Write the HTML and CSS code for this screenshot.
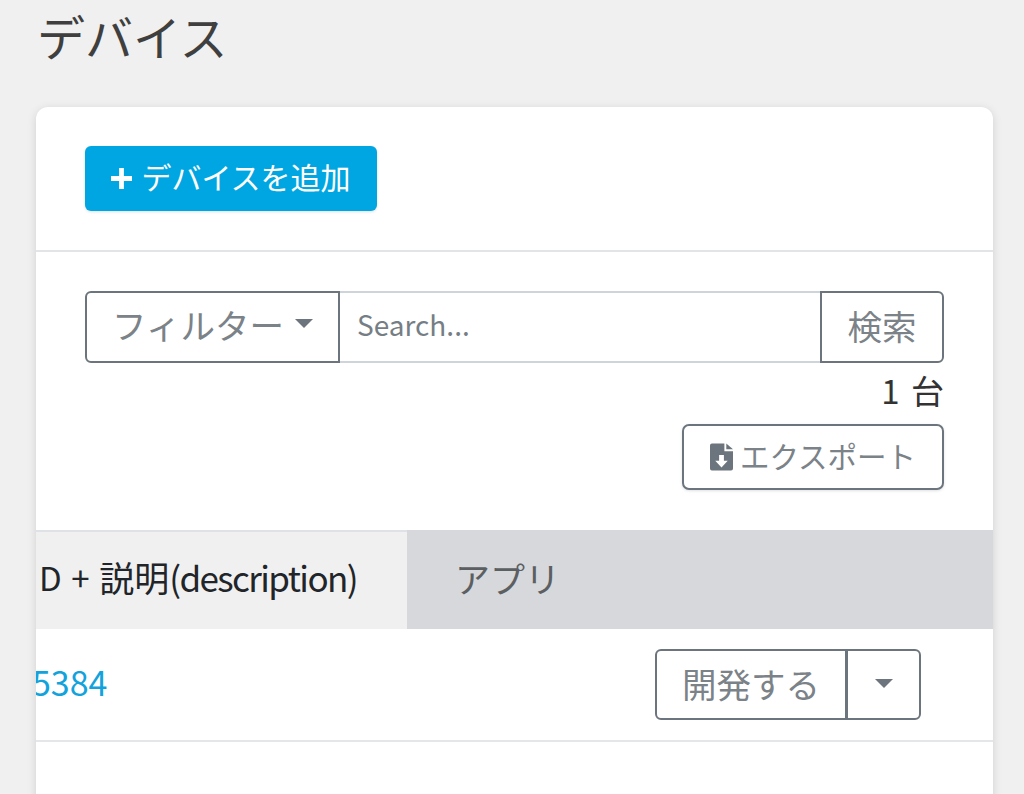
FILE: index.html
```html
<!DOCTYPE html>
<html lang="ja">
<head>
<meta charset="utf-8">
<title>デバイス</title>
<link rel="stylesheet" href="styles.css">
</head>
<body>
<main class="page">
  <h1 class="title">デバイス</h1>
  <section class="card">
    <div class="card-top">
      <button class="btn-add"><svg class="plus" viewBox="0 0 22 22"><path d="M8.500 0h5v8.500H22v5h-8.500V22h-5v-8.500H0v-5h8.500z"/></svg>デバイスを追加</button>
    </div>
    <div class="tools">
      <div class="search-group">
        <button class="btn-filter">フィルター<span class="caret caret-filter"></span></button>
        <div class="search-input">Search...</div>
        <button class="btn-search">検索</button>
      </div>
      <div class="count">1 台</div>
      <button class="btn-export"><svg class="file" viewBox="0 0 24 28"><path d="M0 2a2 2 0 0 1 2-2h13v8h9v18a2 2 0 0 1-2 2H2a2 2 0 0 1-2-2z"/><path d="M17 0l7 6h-7z"/><path class="file-arrow" d="M9.500 12h5v6h4L12 25l-6.500-7h4z"/></svg>エクスポート</button>
    </div>
    <div class="table-head">
      <div class="cell-id"><span class="id-prefix">D + </span><span>説明</span><span class="id-latin">(description)</span></div>
      <div class="cell-app">アプリ</div>
    </div>
    <div class="table-row">
      <a class="device-link" href="#">5384</a>
      <div class="btn-split">
        <button class="btn-dev">開発する</button>
        <button class="btn-drop"><span class="caret"></span></button>
      </div>
    </div>
  </section>
</main>
</body>
</html>
```

FILE: styles.css
```css
* { box-sizing: border-box; }
html, body { margin: 0; height: 100%; }
body {
  background: #f0f0f0;
  font-family: "Noto Sans CJK JP", "Noto Sans", sans-serif;
  overflow: hidden;
}
.page { height: 794px; overflow: hidden; padding: 0 31px 0 36px; }
.title {
  margin: 0;
  height: 107px;
  padding: 3px 0 0 1px;
  font-size: 48px;
  line-height: 64px;
  font-weight: 400;
  color: #3f3f3f;
}
.card {
  height: 720px;
  background: #fff;
  border-radius: 12px 12px 0 0;
  box-shadow: 0 2px 10px rgba(0, 0, 0, .13);
}
button { font-family: inherit; cursor: pointer; background: #fff; }
.card-top {
  height: 145px;
  padding: 39px 49px 0;
  border-bottom: 2px solid #e2e4e6;
}
.btn-add {
  display: flex;
  align-items: center;
  justify-content: center;
  width: 292px;
  height: 65px;
  padding: 0 0 6px;
  border: 0;
  border-radius: 6px;
  background: #00a6e2;
  color: #fff;
  font-size: 30px;
  box-shadow: 0 1px 3px rgba(0, 0, 0, .12);
}
.plus { width: 21px; height: 21px; margin: 6px 9px 0 0; fill: #fff; }
.tools {
  display: flex;
  flex-direction: column;
  align-items: flex-end;
  height: 278px;
  padding: 39px 49px 0;
}
.search-group { display: flex; width: 100%; height: 72px; }
.btn-filter {
  display: flex;
  align-items: center;
  justify-content: center;
  width: 255px;
  padding: 0 0 6px;
  border: 2px solid #6c757d;
  border-radius: 6px 0 0 6px;
  color: #7b8288;
  font-size: 34.500px;
}
.search-input {
  flex: 1;
  padding-left: 17px;
  border: solid #ced4da;
  border-width: 2px 0;
  color: #767e85;
  font-size: 28px;
  line-height: 62px;
}
.btn-search {
  width: 124px;
  padding: 0 0 5px;
  border: 2px solid #6c757d;
  border-radius: 0 6px 6px 0;
  color: #7b8288;
  font-size: 34.500px;
}
.count {
  height: 61px;
  color: #333;
  font-size: 33px;
  line-height: 55px;
  word-spacing: 4px;
}
.btn-export {
  display: flex;
  align-items: center;
  justify-content: center;
  width: 262px;
  height: 66px;
  padding: 0 0 4px;
  border: 2px solid #6c757d;
  border-radius: 7px;
  color: #7b8288;
  font-size: 29.500px;
  box-shadow: 0 1px 3px rgba(0, 0, 0, .12);
}
.file { width: 23px; height: 28px; margin: 3px 7px 0 0; fill: #6c757d; }
.file-arrow { fill: #fff; }
.caret {
  display: inline-block;
  width: 0;
  height: 0;
  border: 9px solid transparent;
  border-top-color: #6c757d;
  border-bottom-width: 0;
}
.caret-filter { margin: 0 0 1px 11px; }
.table-head { display: flex; height: 99px; border-top: 2px solid #dee2e6; }
.cell-id {
  display: flex;
  justify-content: flex-end;
  flex: 0 0 371px;
  overflow: hidden;
  padding-right: 50px;
  background: #f0f0f0;
  color: #212529;
  font-size: 35px;
  line-height: 90px;
  white-space: pre;
}
.id-prefix { font-size: 33px; letter-spacing: -.4px; word-spacing: 3px; }
.id-latin { letter-spacing: -1.600px; }
.cell-app {
  flex: 1;
  margin-top: -2px;
  padding-left: 48px;
  background: #d6d8db;
  color: #5c5f62;
  font-size: 35px;
  line-height: 96px;
}
.table-row {
  display: flex;
  align-items: flex-start;
  justify-content: space-between;
  height: 113px;
  padding: 20px 72px 0 0;
  border-bottom: 2px solid #e4e6e8;
  overflow: hidden;
}
.device-link {
  margin-left: -4px;
  color: #12a3dc;
  font-size: 34px;
  line-height: 66px;
  text-decoration: none;
}
.btn-split { display: flex; height: 71px; }
.btn-dev {
  width: 192px;
  padding: 0 0 4px;
  border: 2px solid #6c757d;
  border-radius: 6px 0 0 6px;
  color: #7b8288;
  font-size: 34.500px;
}
.btn-drop {
  width: 75px;
  margin-left: -1px;
  padding: 0 0 4px;
  border: 2px solid #6c757d;
  border-radius: 0 6px 6px 0;
}
```
